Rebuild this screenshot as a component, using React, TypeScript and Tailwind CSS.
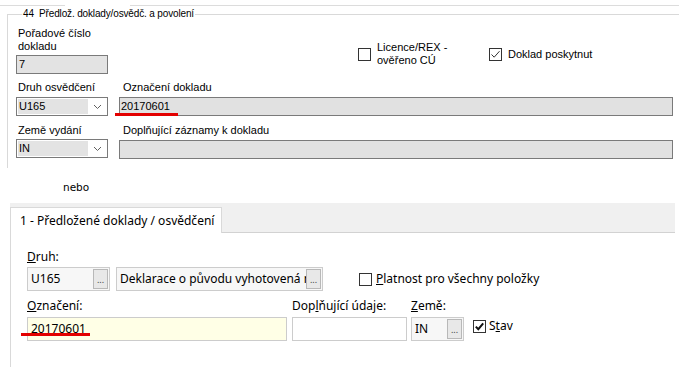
import React from "react";

const topFont = { fontFamily: '"Liberation Sans", Arial, sans-serif' };
const tabFont = { fontFamily: '"Noto Sans", "Open Sans", sans-serif' };

const ClassicCheck = ({ checked }: { checked?: boolean }) => (
  <span className="flex h-[13px] w-[13px] shrink-0 items-center justify-center border border-[#333333] bg-white">
    {checked && (
      <svg width="11" height="11" viewBox="0 0 11 11">
        <path d="M1.5 5.5 L4.2 8.2 L9.5 2.2" fill="none" stroke="#333" strokeWidth="1" />
      </svg>
    )}
  </span>
);

const ModernCheck = ({ checked }: { checked?: boolean }) => (
  <span className="flex h-[13px] w-[13px] shrink-0 items-center justify-center border border-[#333333] bg-white">
    {checked && (
      <svg width="11" height="11" viewBox="0 0 11 11">
        <path d="M1.8 5.6 L4.3 8.2 L9.2 2.4" fill="none" stroke="#111" strokeWidth="2" />
      </svg>
    )}
  </span>
);

const Combo = ({ value }: { value: string }) => (
  <div className="flex h-[19px] w-[92px] border border-[#7a7a7a] bg-white">
    <div className="m-px mr-0 flex flex-1 items-center bg-[#e3e3e3] pl-[1px] leading-none">{value}</div>
    <div className="flex w-[19px] items-center justify-center">
      <svg width="9" height="6" viewBox="0 0 9 6">
        <path d="M1 1 L4.5 4.5 L8 1" fill="none" stroke="#606060" strokeWidth="1" />
      </svg>
    </div>
  </div>
);

const DotsButton = () => (
  <div className="mr-px flex h-[20px] w-[15px] shrink-0 items-center justify-center border border-[#b8b8b8] bg-[#e8e8e8] text-[9px] leading-none text-[#444]">
    ...
  </div>
);

const PickBox = ({ value, width }: { value: string; width: string }) => (
  <div className={`flex h-[24px] items-center border border-[#cccccc] bg-[#f7f7f7] ${width}`}>
    <div className="min-w-0 flex-1 overflow-hidden whitespace-nowrap pl-[3px]">{value}</div>
    <DotsButton />
  </div>
);

export default function App() {
  return (
    <div className="relative h-[372px] w-[679px] overflow-hidden bg-white text-black">
      {/* faint lines of the form above */}
      <div className="flex h-[7px] pt-[5px]">
        <div className="h-px w-[65px] bg-[#dcdcdc]" />
        <div className="w-[65px]" />
        <div className="h-px flex-1 bg-[#dcdcdc]" />
      </div>

      <fieldset
        className="ml-[7px] h-[161px] w-[672px] border-l border-t border-[#d9d9d9] pl-[8px] text-[11px] leading-[13px]"
        style={topFont}
      >
        <legend className="ml-[6px] whitespace-pre px-[1px] text-[10px] leading-[14px] tracking-[-0.15px]">
          44  Předlož. doklady/osvědč. a povolení
        </legend>

        <div className="mt-[6px] flex items-start">
          <div className="w-[92px]">
            <div className="pl-[2px]">
              Pořadové číslo
              <br />
              dokladu
            </div>
            <div className="mt-[2px] flex h-[19px] items-center border border-[#7a7a7a] bg-[#e3e3e3] pl-[2px]">7</div>
          </div>
          <div className="ml-[250px] mt-[14px] flex items-center">
            <div className="flex w-[131px] items-center gap-[6px]">
              <ClassicCheck />
              <span>
                Licence/REX -
                <br />
                ověřeno CÚ
              </span>
            </div>
            <div className="flex items-center gap-[6px]">
              <ClassicCheck checked />
              <span>Doklad poskytnut</span>
            </div>
          </div>
        </div>

        <div className="mt-[7px] flex">
          <div className="w-[92px]">
            <div className="pl-[2px]">Druh osvědčení</div>
            <div className="mt-[3px]">
              <Combo value="U165" />
            </div>
          </div>
          <div className="ml-[11px] w-[554px]">
            <div className="pl-[4px]">Označení dokladu</div>
            <div className="relative mt-[3px] flex h-[19px] items-center border border-[#7a7a7a] bg-[#e1e1e1] pl-[1px]">
              20170601
              <div className="absolute left-[-5px] top-[15px] h-[3px] w-[63px] bg-[#e30000]" />
            </div>
          </div>
        </div>

        <div className="mt-[8px] flex">
          <div className="w-[92px]">
            <div className="pl-[2px]">Země vydání</div>
            <div className="mt-[2px]">
              <Combo value="IN" />
            </div>
          </div>
          <div className="ml-[11px] w-[554px]">
            <div className="pl-[4px]">Doplňující záznamy k dokladu</div>
            <div className="mt-[3px] h-[19px] border border-[#7a7a7a] bg-[#e1e1e1]" />
          </div>
        </div>
      </fieldset>

      <div
        className="ml-[63px] mt-[13px] text-[10.5px] leading-[13px]"
        style={{ fontFamily: '"DejaVu Sans", Verdana, sans-serif' }}
      >
        nebo
      </div>

      <div className="mt-[9px] text-[12px] leading-[16px]" style={tabFont}>
        <div className="ml-[10px] flex h-[30px] w-[665px] items-end border-b border-[#d2d2d2] bg-[#f0f0f0]">
          <div className="mb-[-1px] flex h-[26px] w-[212px] items-center border-l border-r border-t border-[#d9d9d9] bg-white pl-[9px]">
            1 - Předložené doklady / osvědčení
          </div>
        </div>

        <div className="ml-[10px] h-[134px] border-l border-[#d9d9d9] pl-[16px]">
          <div className="pt-[16px]">
            <span className="underline">D</span>ruh:
          </div>
          <div className="mt-[2px] flex items-center">
            <PickBox value="U165" width="w-[83px]" />
            <div className="ml-[6px]">
              <PickBox value="Deklarace o původu vyhotovená n" width="w-[207px]" />
            </div>
            <div className="ml-[36px] flex items-center gap-[4px]">
              <ModernCheck />
              <span>
                <span className="underline">P</span>latnost pro všechny položky
              </span>
            </div>
          </div>

          <div className="mt-[7px] flex">
            <div className="w-[260px]">
              <div>
                <span className="underline">O</span>značení:
              </div>
              <div className="relative mt-[3px] flex h-[24px] items-center border border-[#cccccc] bg-[#ffffe6] pl-[3px]">
                20170601
                <div className="absolute left-[-7px] top-[15px] h-[3px] w-[69px] bg-[#e30000]" />
              </div>
            </div>
            <div className="ml-[5px] w-[115px]">
              <div>
                Dop<span className="underline">l</span>ňující údaje:
              </div>
              <div className="mt-[3px] h-[24px] border border-[#cccccc] bg-white" />
            </div>
            <div className="ml-[4px] w-[53px]">
              <div>
                <span className="underline">Z</span>emě:
              </div>
              <div className="mt-[3px]">
                <PickBox value="IN" width="w-[53px]" />
              </div>
            </div>
            <div className="ml-[9px] mt-[21px] flex h-[14px] items-center gap-[3px]">
              <ModernCheck checked />
              <span>
                S<span className="underline">t</span>av
              </span>
            </div>
          </div>
        </div>
      </div>
    </div>
  );
}
